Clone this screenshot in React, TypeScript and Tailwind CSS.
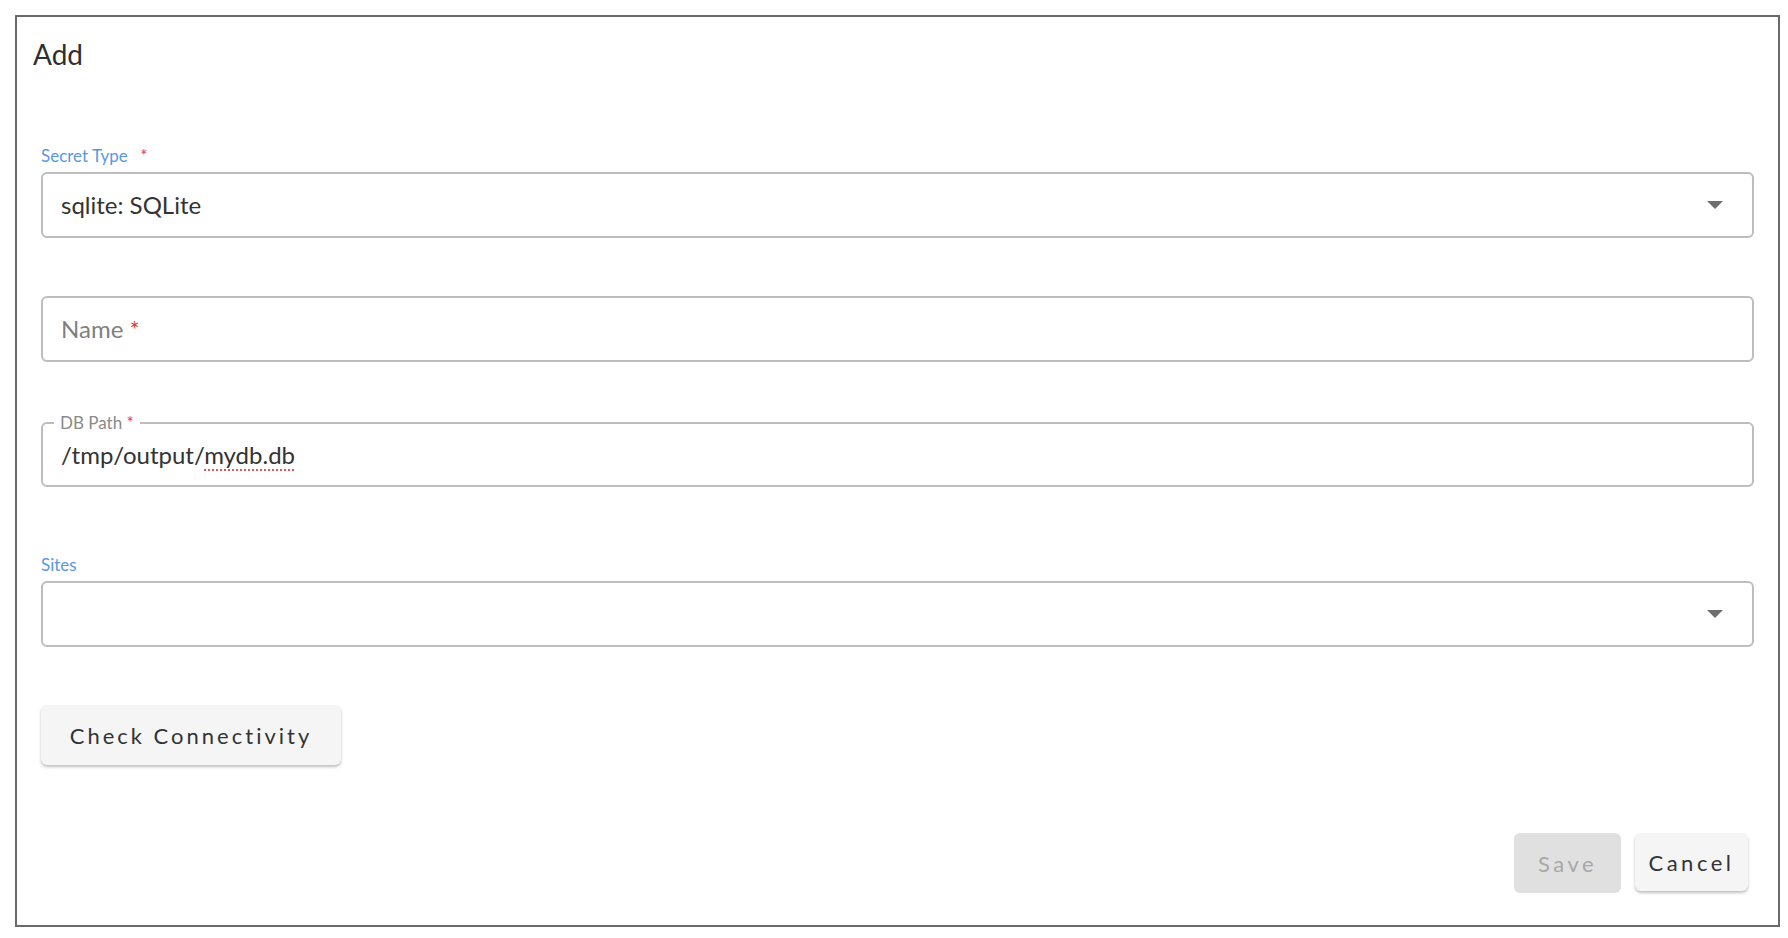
import React from 'react'

const Caret = () => (
  <svg width="16" height="8" viewBox="0 0 16 8" className="shrink-0">
    <polygon points="0,0 16,0 8,8" fill="#6e6e6e" />
  </svg>
)

const Star = () => <span className="text-[#e53935]">*</span>

const App: React.FC = () => {
  return (
    <div
      className="w-[1788px] h-[938px] bg-white pl-[15px] pt-[15px]"
      style={{ fontFamily: 'Lato, "Noto Sans", sans-serif' }}
    >
      <div className="w-[1765px] h-[912px] border-2 border-[#6a6a6a] flex flex-col">
        {/* Title */}
        <div className="pl-4 pt-[21px] text-[28px] leading-[1.2] text-[#2f2f2f]">Add</div>

        <div className="flex flex-col px-6">
          {/* Secret Type */}
          <label className="mt-[74px] text-[17px] leading-[1.2] text-[#5b97e0]">
            Secret Type <span className="ml-2 text-[#e53935]">*</span>
          </label>
          <div className="mt-[6px] h-[66px] border-2 border-[#bdbdbd] rounded-[6px] flex items-center justify-between pl-[18px] pr-[29px]">
            <span className="text-[24px] text-[#333333]">sqlite: SQLite</span>
            <Caret />
          </div>

          {/* Name */}
          <div className="mt-[58px] h-[66px] border-2 border-[#bdbdbd] rounded-[6px] flex items-center pl-[18px]">
            <span className="text-[24px] text-[#7f7f7f]">
              Name <Star />
            </span>
          </div>

          {/* DB Path */}
          <div className="relative mt-[60px] h-[65px] border-2 border-[#bdbdbd] rounded-[6px] flex items-center pl-[18px] pt-[2px]">
            <span className="absolute left-[11px] -top-[14px] bg-white px-[6px] text-[17px] leading-[1.5] text-[#8a8a8a]">
              DB Path <Star />
            </span>
            <span className="text-[24px] text-[#333333]">
              /tmp/output/
              <span className="underline decoration-dotted decoration-[#e05555] decoration-2 underline-offset-[5px]">
                mydb.db
              </span>
            </span>
          </div>

          {/* Sites */}
          <label className="mt-[68px] text-[17px] leading-[1.2] text-[#5b97e0]">Sites</label>
          <div className="mt-[6px] h-[66px] border-2 border-[#bdbdbd] rounded-[6px] flex items-center justify-end pr-[29px]">
            <Caret />
          </div>

          {/* Check Connectivity */}
          <div className="mt-[58px]">
            <button className="h-[60px] w-[300px] rounded-[6px] bg-[#f5f5f5] text-[22px] tracking-[3px] text-[#333333] shadow-[0_2px_3px_rgba(0,0,0,0.25)]">
              Check Connectivity
            </button>
          </div>
        </div>

        {/* Actions */}
        <div className="mt-[68px] flex justify-end gap-[14px] pr-[30px]">
          <button className="h-[60px] w-[107px] rounded-[6px] bg-[#e0e0e0] text-[22px] tracking-[3.5px] text-[#a8a8a8]">
            Save
          </button>
          <button className="h-[58px] w-[113px] rounded-[6px] bg-[#f5f5f5] text-[22px] tracking-[3.5px] text-[#333333] shadow-[0_2px_3px_rgba(0,0,0,0.25)]">
            Cancel
          </button>
        </div>
      </div>
    </div>
  )
}

export default App
